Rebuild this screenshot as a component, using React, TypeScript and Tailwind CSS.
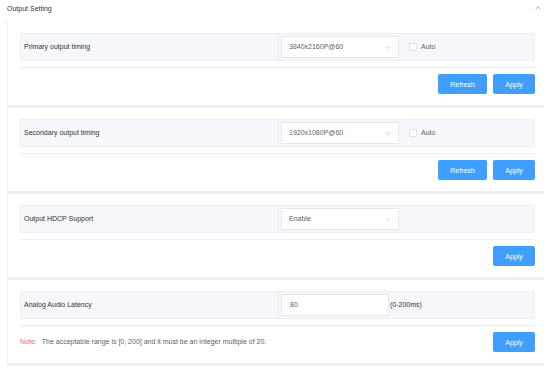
import React from 'react';

const font = { fontFamily: '"Liberation Sans", Arial, sans-serif' };

const Chevron = () => (
  <svg width="8" height="8" viewBox="0 0 10 10" fill="none">
    <path d="M2 6.5 L5 3.5 L8 6.5" stroke="#909399" strokeWidth="1" />
  </svg>
);

const Caret = () => (
  <svg width="7" height="7" viewBox="0 0 10 10" fill="none">
    <path d="M2 3.5 L5 6.5 L8 3.5" stroke="#c0c4cc" strokeWidth="1" />
  </svg>
);

const Btn = ({ children, wide }: { children: React.ReactNode; wide?: boolean }) => (
  <button
    className={`h-[20px] ${wide ? 'w-[49px]' : 'w-[42px]'} rounded-[2px] bg-[#409eff] text-white text-[7px] leading-none`}
  >
    {children}
  </button>
);

const Select = ({ value }: { value: string }) => (
  <div className="w-[118px] h-[22px] bg-white border border-[#e4e7ed] rounded-[2px] flex items-center justify-between pl-[7px] pr-[6px]">
    <span className="text-[7px] text-[#606266]">{value}</span>
    <Caret />
  </div>
);

const AutoBox = () => (
  <div className="flex items-center ml-[10px]">
    <div className="w-[8px] h-[8px] bg-white border border-[#dcdfe6] rounded-[1px]" />
    <span className="ml-[4px] text-[7px] text-[#606266]">Auto</span>
  </div>
);

const Row = ({ label, children }: { label: string; children: React.ReactNode }) => (
  <div className="flex h-[28px] border border-[#ebeef5] bg-[#f5f7fa] rounded-[2px]">
    <div className="w-[258px] border-r border-[#ebeef5] flex items-center pl-[3px]">
      <span className="text-[7px] text-[#333333]">{label}</span>
    </div>
    <div className="flex-1 flex items-center pl-[2px]">{children}</div>
  </div>
);

const Card = ({ label, control, footer }: { label: string; control: React.ReactNode; footer: React.ReactNode }) => (
  <div className="bg-white border-l border-[#f0f0f0] pl-[12px] pr-[9px] pt-[11px] pb-[11px]">
    <Row label={label}>{control}</Row>
    <div className="mt-[6px] h-px bg-[#ebeef5]" />
    <div className="mt-[6px]">{footer}</div>
  </div>
);

export default function App() {
  return (
    <div className="w-[550px] h-[368px] bg-white overflow-hidden" style={font}>
      <div className="h-[22px] flex items-start justify-between pl-[7px] pr-[8px] pt-[4px]">
        <span className="text-[7px] text-[#333333]">Output Setting</span>
        <Chevron />
      </div>
      <div className="ml-[7px] w-[537px] flex flex-col gap-[3px] bg-[#eef0f3] pb-[3px]">
        <Card
          label="Primary output timing"
          control={
            <>
              <Select value="3840x2160P@60" />
              <AutoBox />
            </>
          }
          footer={
            <div className="flex justify-end gap-[6px]">
              <Btn wide>Refresh</Btn>
              <Btn>Apply</Btn>
            </div>
          }
        />
        <Card
          label="Secondary output timing"
          control={
            <>
              <Select value="1920x1080P@60" />
              <AutoBox />
            </>
          }
          footer={
            <div className="flex justify-end gap-[6px]">
              <Btn wide>Refresh</Btn>
              <Btn>Apply</Btn>
            </div>
          }
        />
        <Card
          label="Output HDCP Support"
          control={<Select value="Enable" />}
          footer={
            <div className="flex justify-end">
              <Btn>Apply</Btn>
            </div>
          }
        />
        <Card
          label="Analog Audio Latency"
          control={
            <>
              <div className="w-[108px] h-[22px] bg-white border border-[#e4e7ed] rounded-[2px] flex items-center pl-[8px]">
                <span className="text-[7px] text-[#606266]">80</span>
              </div>
              <span className="ml-[1px] text-[7px] text-[#333333]">(0-200ms)</span>
            </>
          }
          footer={
            <div className="flex items-center justify-between">
              <div className="text-[7px]">
                <span className="text-[#f56c6c]">Note:</span>
                <span className="ml-[5px] text-[#606266]">
                  The acceptable range is [0, 200] and it must be an integer multiple of 20.
                </span>
              </div>
              <Btn>Apply</Btn>
            </div>
          }
        />
      </div>
    </div>
  );
}
